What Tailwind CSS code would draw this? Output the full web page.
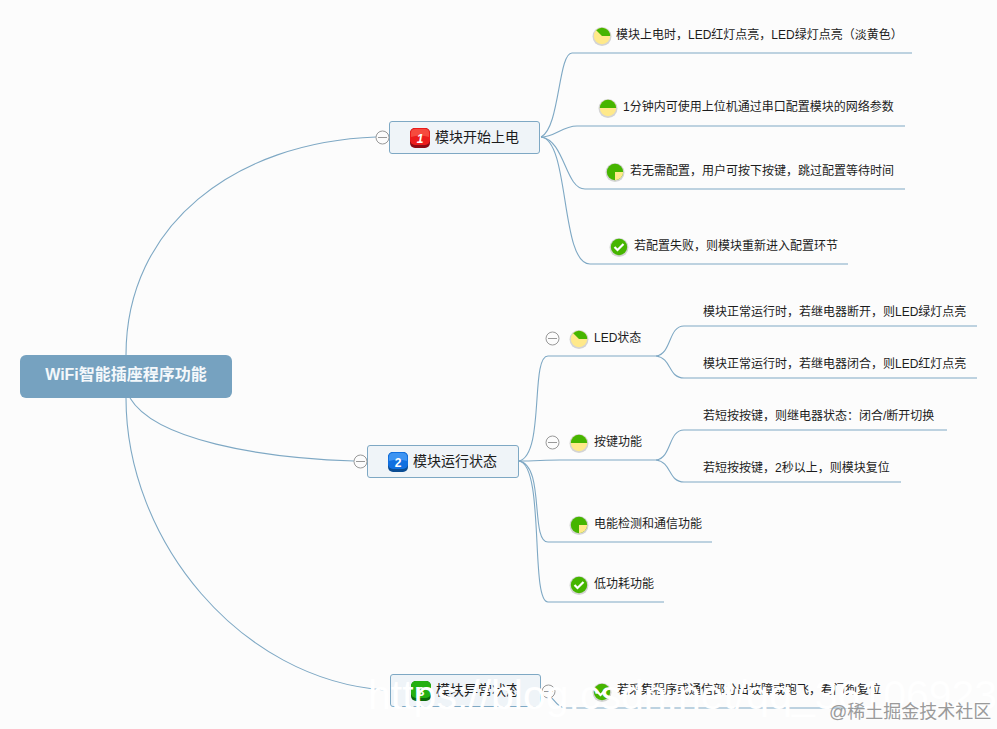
<!DOCTYPE html>
<html lang="zh">
<head>
  <meta charset="UTF-8" />
  <title>WiFi智能插座程序功能</title>
  <script src="https://cdn.jsdelivr.net/npm/@tailwindcss/browser@4"></script>
</head>
<body class="bg-[#fcfcfc]">
<div class="relative w-[997px] h-[729px] overflow-hidden bg-[#fcfcfc] text-[#1c1c1c] text-[12px] leading-[16px] font-['Liberation_Sans','Noto_Sans_CJK_SC',sans-serif]">

  <!-- connectors -->
  <svg class="absolute inset-0" width="997" height="729" fill="none" stroke="#7ea8c4" stroke-width="1.100">
    <path d="M126 355C126 225 235 142 376 137" />
    <path d="M130 398C155 440 260 458 354 461" />
    <path d="M126 398C126 540 240 680 385 690" />
    <!-- node 1 -->
    <path d="M541 137C560 128 558 53 572 53H912" />
    <path d="M541 137C555 137 562 126 577 126H905" />
    <path d="M541 137C565 140 565 189 585 189H905" />
    <path d="M541 137C570 140 560 264 590 264H848" />
    <!-- node 2 -->
    <path d="M519 461C545 455 530 356 548 356H656" />
    <path d="M519 461C535 461 545 460 560 460H656" />
    <path d="M519 461C545 465 530 542 548 542H712" />
    <path d="M519 461C545 465 530 602 548 602H664" />
    <path d="M656 356C672 354 668 326 684 326H977" />
    <path d="M656 356C672 358 668 378 684 378H977" />
    <path d="M656 460C672 458 668 430 684 430H947" />
    <path d="M656 460C672 462 668 482 684 482H901" />
    <!-- node 3 -->
    <path d="M541 691C552 692 555 708 566 708H880" />
  </svg>

  <!-- root -->
  <div class="absolute left-[20px] top-[355px] w-[212px] h-[43px] pb-[3px] rounded-[6px] bg-[#76a2c0] flex items-center justify-center text-[#f4f8fb] text-[16px] font-bold">WiFi智能插座程序功能</div>

  <!-- main topics -->
  <div class="absolute left-[389px] top-[121px] w-[151px] h-[33px] rounded-[3px] border border-[#7ea8c4] bg-[#eff4f8] flex items-center gap-[5px] pl-[20px] text-[14px]">
    <svg width="20" height="20" viewBox="0 0 20 20"><rect width="20" height="20" rx="5" fill="#8d0a14"/><rect width="20" height="17" rx="5" fill="#ec1c1c"/><path d="M1 9Q10 6 19 9V5Q19 1 15 1H5Q1 1 1 5Z" fill="#f64a3e"/><text x="10" y="15" text-anchor="middle" fill="#fff" font-size="12" font-weight="700" font-style="italic" font-family="Liberation Sans">1</text></svg>
    <span class="pb-[2px]">模块开始上电</span>
  </div>
  <div class="absolute left-[367px] top-[445px] w-[152px] h-[33px] rounded-[3px] border border-[#7ea8c4] bg-[#eff4f8] flex items-center gap-[5px] pl-[20px] text-[14px]">
    <svg width="20" height="20" viewBox="0 0 20 20"><rect width="20" height="20" rx="5" fill="#0b4d94"/><rect width="20" height="17" rx="5" fill="#1170e0"/><path d="M1 9Q10 6 19 9V5Q19 1 15 1H5Q1 1 1 5Z" fill="#3d94f2"/><text x="10" y="15" text-anchor="middle" fill="#fff" font-size="12" font-weight="700" font-family="Liberation Sans">2</text></svg>
    <span class="pb-[2px]">模块运行状态</span>
  </div>
  <div class="absolute left-[390px] top-[674px] w-[151px] h-[33px] rounded-[3px] border border-[#7ea8c4] bg-[#eff4f8] flex items-center gap-[5px] pl-[20px] text-[14px]">
    <svg width="20" height="20" viewBox="0 0 20 20"><rect width="20" height="20" rx="5" fill="#0a6a0a"/><rect width="20" height="17" rx="5" fill="#25b010"/><text x="10" y="15" text-anchor="middle" fill="#fff" font-size="12" font-weight="700" font-family="Liberation Sans">3</text></svg>
    <span class="pb-[2px]">模块异常状态</span>
  </div>

  <!-- collapse buttons -->
  <svg class="absolute inset-0" width="997" height="729" fill="#fcfcfc" stroke="#999">
    <g><circle cx="382.500" cy="137.500" r="6.500"/><path d="M378 137.500h9"/></g>
    <g><circle cx="360.500" cy="461.500" r="6.500"/><path d="M356 461.500h9"/></g>
    <g><circle cx="552.500" cy="338.500" r="6.500"/><path d="M548 338.500h9"/></g>
    <g><circle cx="552.500" cy="442.500" r="6.500"/><path d="M548 442.500h9"/></g>
    <g><circle cx="548.500" cy="691.500" r="6.500"/><path d="M544 691.500h9"/></g>
  </svg>

  <!-- task icons: 3/8 done, half, 3/4, complete -->
  <svg class="absolute inset-0" width="997" height="729" stroke="none">
    <defs>
      <g id="p38"><circle cy="0.500" r="9.500" fill="#d4d4d4"/><circle r="8.200" fill="#ffe98a"/><path d="M0 0L-5.800 -5.800A8.200 8.200 0 0 1 8.200 0Z" fill="#46b500"/></g>
      <g id="p50"><circle cy="0.500" r="9.500" fill="#d4d4d4"/><circle r="8.200" fill="#ffe98a"/><path d="M-8.200 0A8.200 8.200 0 0 1 8.200 0Z" fill="#46b500"/></g>
      <g id="p75"><circle cy="0.500" r="9.500" fill="#d4d4d4"/><circle r="8.200" fill="#46b500"/><path d="M0 0H8.200A8.200 8.200 0 0 1 0 8.200Z" fill="#ffe98a"/></g>
      <g id="done"><circle cy="0.500" r="9.500" fill="#d4d4d4"/><circle r="8.200" fill="#46b500"/><path d="M-4.500 0L-1.500 3L4.500 -3" fill="none" stroke="#fff" stroke-width="2.200"/></g>
    </defs>
    <use href="#p38" x="602" y="36"/>
    <use href="#p50" x="608" y="108"/>
    <use href="#p75" x="615" y="172"/>
    <use href="#done" x="619" y="247"/>
    <use href="#p38" x="579" y="339"/>
    <use href="#p50" x="579" y="443"/>
    <use href="#p75" x="579" y="525"/>
    <use href="#done" x="579" y="585"/>
    <use href="#done" x="602" y="692"/>
  </svg>

  <!-- labels -->
  <span class="absolute left-[616px] top-[27px] whitespace-nowrap">模块上电时，LED红灯点亮，LED绿灯点亮（淡黄色）</span>
  <span class="absolute left-[623px] top-[99px] whitespace-nowrap">1分钟内可使用上位机通过串口配置模块的网络参数</span>
  <span class="absolute left-[630px] top-[163px] whitespace-nowrap">若无需配置，用户可按下按键，跳过配置等待时间</span>
  <span class="absolute left-[634px] top-[238px] whitespace-nowrap">若配置失败，则模块重新进入配置环节</span>
  <span class="absolute left-[594px] top-[330px] whitespace-nowrap">LED状态</span>
  <span class="absolute left-[594px] top-[434px] whitespace-nowrap">按键功能</span>
  <span class="absolute left-[594px] top-[516px] whitespace-nowrap">电能检测和通信功能</span>
  <span class="absolute left-[594px] top-[576px] whitespace-nowrap">低功耗功能</span>
  <span class="absolute left-[703px] top-[304px] whitespace-nowrap">模块正常运行时，若继电器断开，则LED绿灯点亮</span>
  <span class="absolute left-[703px] top-[356px] whitespace-nowrap">模块正常运行时，若继电器闭合，则LED红灯点亮</span>
  <span class="absolute left-[703px] top-[408px] whitespace-nowrap">若短按按键，则继电器状态：闭合/断开切换</span>
  <span class="absolute left-[703px] top-[460px] whitespace-nowrap">若短按按键，2秒以上，则模块复位</span>
  <span class="absolute left-[617px] top-[682px] whitespace-nowrap">若采集程序或通信部分出故障或跑飞，看门狗复位</span>

  <!-- watermarks -->
  <span class="absolute left-[368px] top-[671px] whitespace-nowrap text-white text-[41px] leading-[48px]">https://blog.csdn.net/qq_36106923</span>
  <span class="absolute left-[829px] top-[702px] whitespace-nowrap text-[#9a9a9a] text-[18px] leading-[20px]">@稀土掘金技术社区</span>
</div>
</body>
</html>
